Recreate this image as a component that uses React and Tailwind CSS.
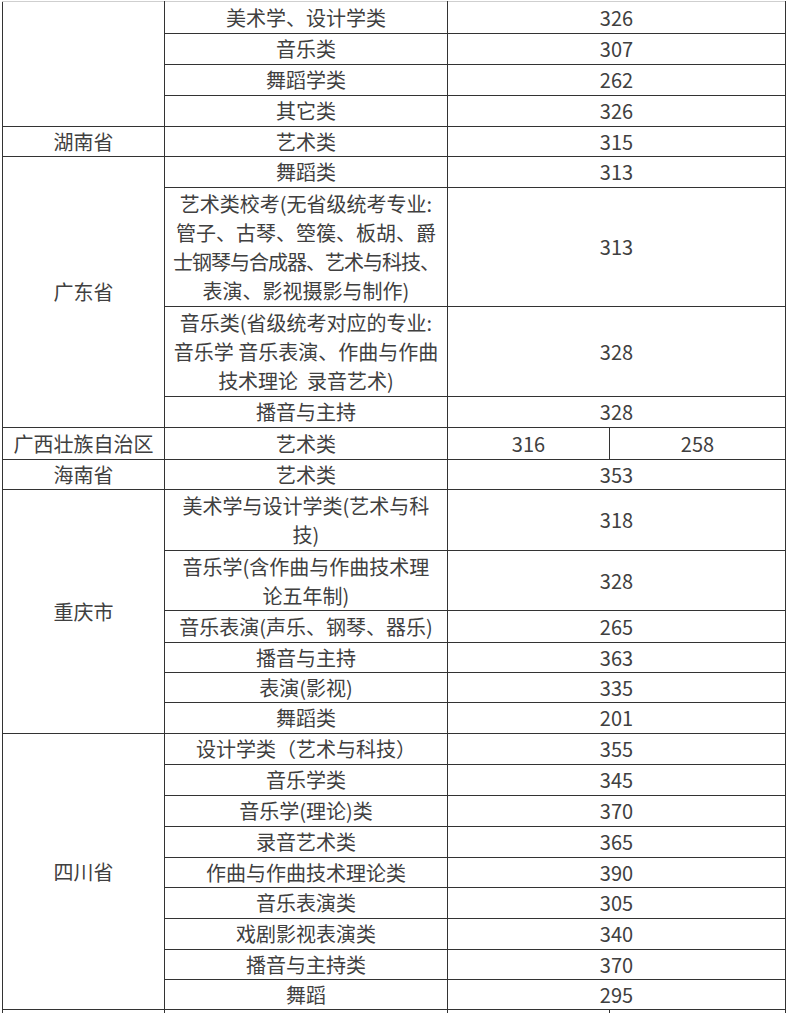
import React from "react";

const rows = [
  { prov: "", span: 4, major: "美术学、设计学类", score: "326", h: "h-[32px]" },
  { major: "音乐类", score: "307", h: "h-[31px]" },
  { major: "舞蹈学类", score: "262", h: "h-[31px]" },
  { major: "其它类", score: "326", h: "h-[31px]" },
  { prov: "湖南省", span: 1, major: "艺术类", score: "315", h: "h-[30px]" },
  { prov: "广东省", span: 4, major: "舞蹈类", score: "313", h: "h-[31px]" },
  {
    major: [
      "艺术类校考(无省级统考专业:",
      "管子、古琴、箜篌、板胡、爵",
      "士钢琴与合成器、艺术与科技、",
      "表演、影视摄影与制作)",
    ],
    score: "313",
    h: "h-[119px]",
  },
  {
    major: ["音乐类(省级统考对应的专业:", "音乐学 音乐表演、作曲与作曲", "技术理论\u00a0 录音艺术)"],
    score: "328",
    h: "h-[90px]",
  },
  { major: "播音与主持", score: "328", h: "h-[31px]" },
  { prov: "广西壮族自治区", span: 1, major: "艺术类", split: ["316", "258"], h: "h-[32px]" },
  { prov: "海南省", span: 1, major: "艺术类", score: "353", h: "h-[30px]" },
  { prov: "重庆市", span: 6, major: ["美术学与设计学类(艺术与科", "技)"], score: "318", h: "h-[61px]" },
  { major: ["音乐学(含作曲与作曲技术理", "论五年制)"], score: "328", h: "h-[60px]" },
  { major: "音乐表演(声乐、钢琴、器乐)", score: "265", h: "h-[32px]" },
  { major: "播音与主持", score: "363", h: "h-[30px]" },
  { major: "表演(影视)", score: "335", h: "h-[30px]" },
  { major: "舞蹈类", score: "201", h: "h-[31px]" },
  { prov: "四川省", span: 9, major: "设计学类（艺术与科技）", score: "355", h: "h-[31px]" },
  { major: "音乐学类", score: "345", h: "h-[31px]" },
  { major: "音乐学(理论)类", score: "370", h: "h-[31px]" },
  { major: "录音艺术类", score: "365", h: "h-[31px]" },
  { major: "作曲与作曲技术理论类", score: "390", h: "h-[30px]" },
  { major: "音乐表演类", score: "305", h: "h-[31px]" },
  { major: "戏剧影视表演类", score: "340", h: "h-[31px]" },
  { major: "播音与主持类", score: "370", h: "h-[30px]" },
  { major: "舞蹈", score: "295", h: "h-[30px]" },
];

const cell = "border-[1.5px] border-[#333] text-center align-middle p-0";

function Major({ value }) {
  if (!Array.isArray(value)) return value;
  return value.map((line, i) => (
    <div
      key={i}
      className={
        i === 2 && value.length === 4
          ? "whitespace-nowrap leading-[29px] tracking-[-1px]"
          : "whitespace-nowrap leading-[29px]"
      }
    >
      {line}
    </div>
  ));
}

export default function App() {
  return (
    <div
      className="bg-white w-[790px] h-[1013px] overflow-hidden pt-[1px] pl-[2px] text-[#404040] text-[20px] leading-[26px]"
      style={{ fontFamily: '"Noto Sans CJK SC", "Noto Sans", sans-serif' }}
    >
      <table className="table-fixed border-collapse w-[783px] border-t border-t-[#cfcfcf]">
        <colgroup>
          <col className="w-[162px]" />
          <col className="w-[283px]" />
          <col className="w-[162px]" />
          <col className="w-[176px]" />
        </colgroup>
        <tbody>
          {rows.map((r, i) => (
            <tr key={i} className={r.h}>
              {r.span !== undefined && (
                <td rowSpan={r.span} className={cell + (i === 0 ? " border-t-[#cfcfcf]" : "")}>
                  {r.prov}
                </td>
              )}
              <td className={cell + (i === 0 ? " border-t-[#cfcfcf]" : "")}>
                <Major value={r.major} />
              </td>
              {r.split ? (
                <>
                  <td className={cell}>{r.split[0]}</td>
                  <td className={cell}>{r.split[1]}</td>
                </>
              ) : (
                <td colSpan={2} className={cell + (i === 0 ? " border-t-[#cfcfcf]" : "")}>
                  {r.score}
                </td>
              )}
            </tr>
          ))}
          <tr className="h-[31px]">
            <td className={cell}></td>
            <td className={cell}></td>
            <td className={cell}></td>
            <td className={cell}></td>
          </tr>
        </tbody>
      </table>
    </div>
  );
}
